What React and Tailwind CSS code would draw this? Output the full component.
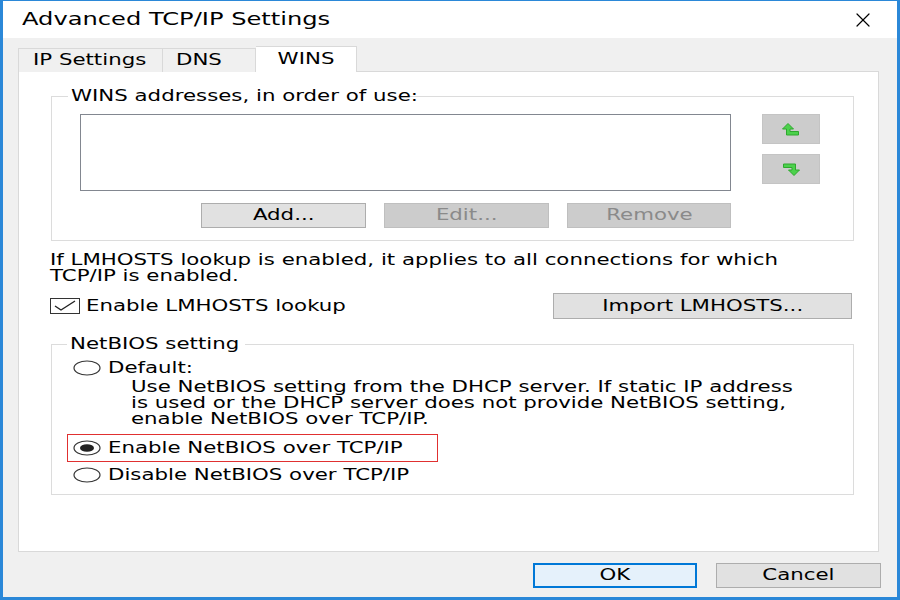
import { X } from "lucide-react";

const font = { fontFamily: '"DejaVu Sans", Verdana, sans-serif' };

// the dialog text is wide, so each label is stretched sideways
function T({ children, center }) {
  return (
    <span className={`inline-block whitespace-nowrap scale-x-[1.42] ${center ? "origin-center" : "origin-left"}`}>
      {children}
    </span>
  );
}

function Radio({ checked }) {
  return (
    <svg width="28" height="16" viewBox="0 0 28 16" className="shrink-0">
      <ellipse cx="14" cy="8" rx="13" ry="7" fill="white" stroke="#333" strokeWidth="1.2" />
      {checked && <ellipse cx="14" cy="8" rx="7" ry="3.8" fill="#222" />}
    </svg>
  );
}

function Checkbox() {
  return (
    <svg width="30" height="16" viewBox="0 0 30 16" className="shrink-0">
      <rect x="0.5" y="0.5" width="29" height="15" fill="white" stroke="#333" />
      <path d="M5 8 L11 12 L25 3" fill="none" stroke="#222" strokeWidth="1.4" />
    </svg>
  );
}

function ArrowUp() {
  return (
    <svg width="18" height="13" viewBox="0 0 18 13">
      <path d="M6 0.5 L11.5 6 L8 6 L8 8.5 L16.5 8.5 L16.5 12 L4.5 12 L4.5 6 L0.5 6 Z" fill="#4cd14c" stroke="#2ea82e" strokeWidth="1" />
    </svg>
  );
}

function ArrowDown() {
  return (
    <svg width="18" height="13" viewBox="0 0 18 13">
      <path d="M1.5 1 L13.5 1 L13.5 7 L17.5 7 L12 12.5 L6.5 7 L10 7 L10 4.5 L1.5 4.5 Z" fill="#4cd14c" stroke="#2ea82e" strokeWidth="1" />
    </svg>
  );
}

function Button({ children, disabled, primary, className = "" }) {
  let look = "bg-[#e1e1e1] border-[#adadad] text-black";
  if (disabled) look = "bg-[#cccccc] border-[#bfbfbf] text-[#8a8a8a]";
  if (primary) look = "bg-[#e5f1fb] border-[#0078d7] border-2 text-black";
  return (
    <div className={`h-[25px] border flex items-center justify-center text-[15px] ${look} ${className}`}>
      <T center>{children}</T>
    </div>
  );
}

export default function App() {
  return (
    <div
      className="w-[900px] h-[600px] flex flex-col border-l-[3px] border-r-[3px] border-t border-b-[3px] border-[#2b88d8] text-black overflow-hidden"
      style={font}
    >
      {/* title bar */}
      <div className="h-[37px] bg-white flex items-center justify-between pl-[19px] pr-[22px] shrink-0">
        <span className="text-[17px]">
          <T>Advanced TCP/IP Settings</T>
        </span>
        <X size={24} strokeWidth={1.2} />
      </div>

      <div className="flex-1 bg-[#f0f0f0] flex flex-col pl-[15px] pr-[16px] pt-[9px]">
        {/* tabs */}
        <div className="flex items-end h-[25px] -mb-px relative z-10">
          <div className="w-[145px] h-[24px] border border-b-0 border-[#d9d9d9] bg-[#f0f0f0] flex items-center pl-[14px] text-[15px]">
            <T>IP Settings</T>
          </div>
          <div className="w-[93px] h-[24px] border border-b-0 border-l-0 border-[#d9d9d9] bg-[#f0f0f0] flex items-center pl-[13px] text-[15px]">
            <T>DNS</T>
          </div>
          <div className="w-[101px] h-[26px] border border-b-0 border-l-0 border-[#d9d9d9] bg-white flex items-start pt-[1px] justify-center text-[15px]">
            <T center>WINS</T>
          </div>
        </div>

        {/* tab panel */}
        <div className="w-[861px] h-[481px] bg-white border border-[#d9d9d9] pl-[31px] pt-[24px] flex flex-col">
          {/* WINS group */}
          <div className="relative w-[803px] h-[145px] border border-[#dcdcdc] ml-px">
            <span className="absolute left-[16px] -top-[10px] bg-white pl-[3px] pr-[6px] text-[15px] leading-[18px] w-[330px]">
              <T>WINS addresses, in order of use:</T>
            </span>
            <div className="flex pl-[28px] pt-[17px] gap-[31px]">
              <div className="w-[651px] h-[77px] border border-[#828790] bg-white" />
              <div className="flex flex-col gap-[10px]">
                <div className="w-[58px] h-[30px] bg-[#cccccc] border border-[#c4c4c4] flex items-center justify-center">
                  <ArrowUp />
                </div>
                <div className="w-[58px] h-[30px] bg-[#cccccc] border border-[#c4c4c4] flex items-center justify-center">
                  <ArrowDown />
                </div>
              </div>
            </div>
            <div className="flex gap-[18px] pl-[149px] mt-[12px]">
              <Button className="w-[165px]">Add...</Button>
              <Button disabled className="w-[165px]">Edit...</Button>
              <Button disabled className="w-[164px]">Remove</Button>
            </div>
          </div>

          <div className="mt-[11px] text-[15px] leading-[16px]">
            <div className="h-[16px]"><T>If LMHOSTS lookup is enabled, it applies to all connections for which</T></div>
            <div className="h-[16px]"><T>TCP/IP is enabled.</T></div>
          </div>

          <div className="flex items-center justify-between w-[802px] mt-[9px]">
            <div className="flex items-center gap-[6px]">
              <Checkbox />
              <span className="text-[15px]">
                <T>Enable LMHOSTS lookup</T>
              </span>
            </div>
            <Button className="w-[299px] h-[26px]">Import LMHOSTS...</Button>
          </div>

          {/* NetBIOS group */}
          <div className="relative w-[803px] h-[151px] border border-[#dcdcdc] ml-px mt-[25px] pl-[21px] pt-[15px]">
            <span className="absolute left-[15px] -top-[10px] bg-white pl-[3px] pr-[6px] text-[15px] leading-[18px] w-[178px]">
              <T>NetBIOS setting</T>
            </span>
            <div className="flex items-center gap-[7px] h-[16px]">
              <Radio />
              <span className="text-[15px]">
                <T>Default:</T>
              </span>
            </div>
            <div className="pl-[58px] mt-[3px] text-[15px] leading-[16px]">
              <div className="h-[16px]"><T>Use NetBIOS setting from the DHCP server. If static IP address</T></div>
              <div className="h-[16px]"><T>is used or the DHCP server does not provide NetBIOS setting,</T></div>
              <div className="h-[16px]"><T>enable NetBIOS over TCP/IP.</T></div>
            </div>
            <div className="-ml-[6px] mt-[7px] w-[371px] h-[28px] border border-[#e03030] flex items-center gap-[7px] pl-[5px]">
              <Radio checked />
              <span className="text-[15px]">
                <T>Enable NetBIOS over TCP/IP</T>
              </span>
            </div>
            <div className="flex items-center gap-[7px] h-[16px] mt-[5px]">
              <Radio />
              <span className="text-[15px]">
                <T>Disable NetBIOS over TCP/IP</T>
              </span>
            </div>
          </div>
        </div>

        {/* footer */}
        <div className="flex justify-end gap-[19px] mt-[11px]">
          <Button primary className="w-[164px]">OK</Button>
          <Button className="w-[165px]">Cancel</Button>
        </div>
      </div>
    </div>
  );
}
